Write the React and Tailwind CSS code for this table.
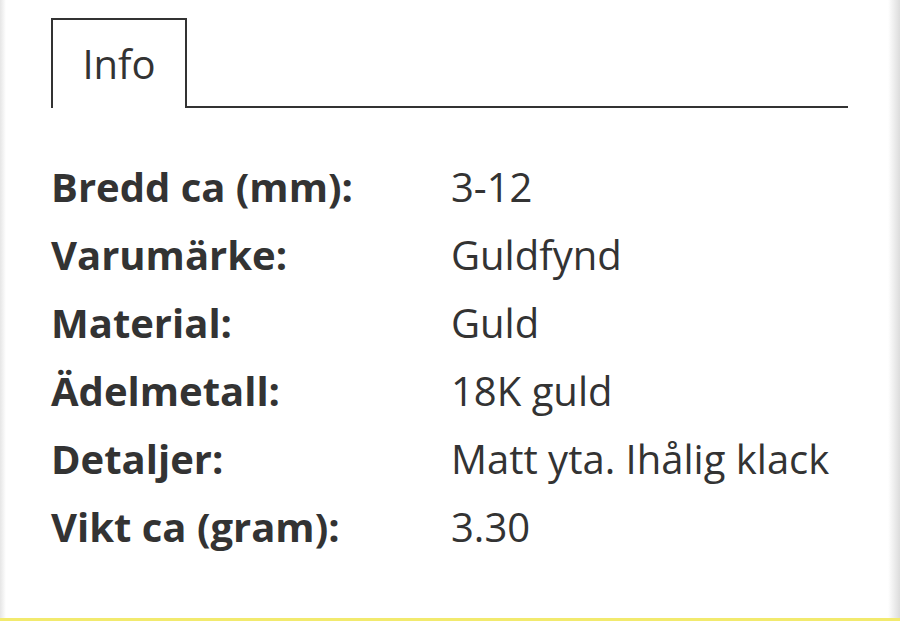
export default function App() {
  const rows = [
    ["Bredd ca (mm):", "3-12"],
    ["Varumärke:", "Guldfynd"],
    ["Material:", "Guld"],
    ["Ädelmetall:", "18K guld"],
    ["Detaljer:", "Matt yta. Ihålig klack"],
    ["Vikt ca (gram):", "3.30"],
  ];
  return (
    <div className="w-[900px] h-[628px] bg-white flex flex-col overflow-hidden text-[#333]" style={{ fontFamily: '"Open Sans", sans-serif' }}>
      <div className="flex flex-1">
        <div className="w-[6px] bg-gradient-to-r from-[#e6e6e6] to-white" />
        <div className="flex-1 flex flex-col">
          <div className="pt-[18px] pl-[45px] pr-[40px] flex items-end">
            <div className="w-[136px] h-[90px] border-2 border-b-0 border-[#333] flex items-center justify-center text-[40px] leading-none">
              Info
            </div>
            <div className="flex-1 border-b-2 border-[#333]" />
          </div>
          <div className="pl-[45px] pt-[45px] grid grid-cols-[400px_1fr] text-[40px] leading-[68px]">
            {rows.map(([k, v]) => (
              <div key={k} className="contents">
                <div className="font-bold">{k}</div>
                <div>{v}</div>
              </div>
            ))}
          </div>
        </div>
        <div className="w-[12px] bg-gradient-to-r from-white to-[#dcdcdc]" />
      </div>
      <div className="h-[3px] bg-[#f2ea6e]" />
      <div className="h-[7px] bg-white" />
    </div>
  );
}
